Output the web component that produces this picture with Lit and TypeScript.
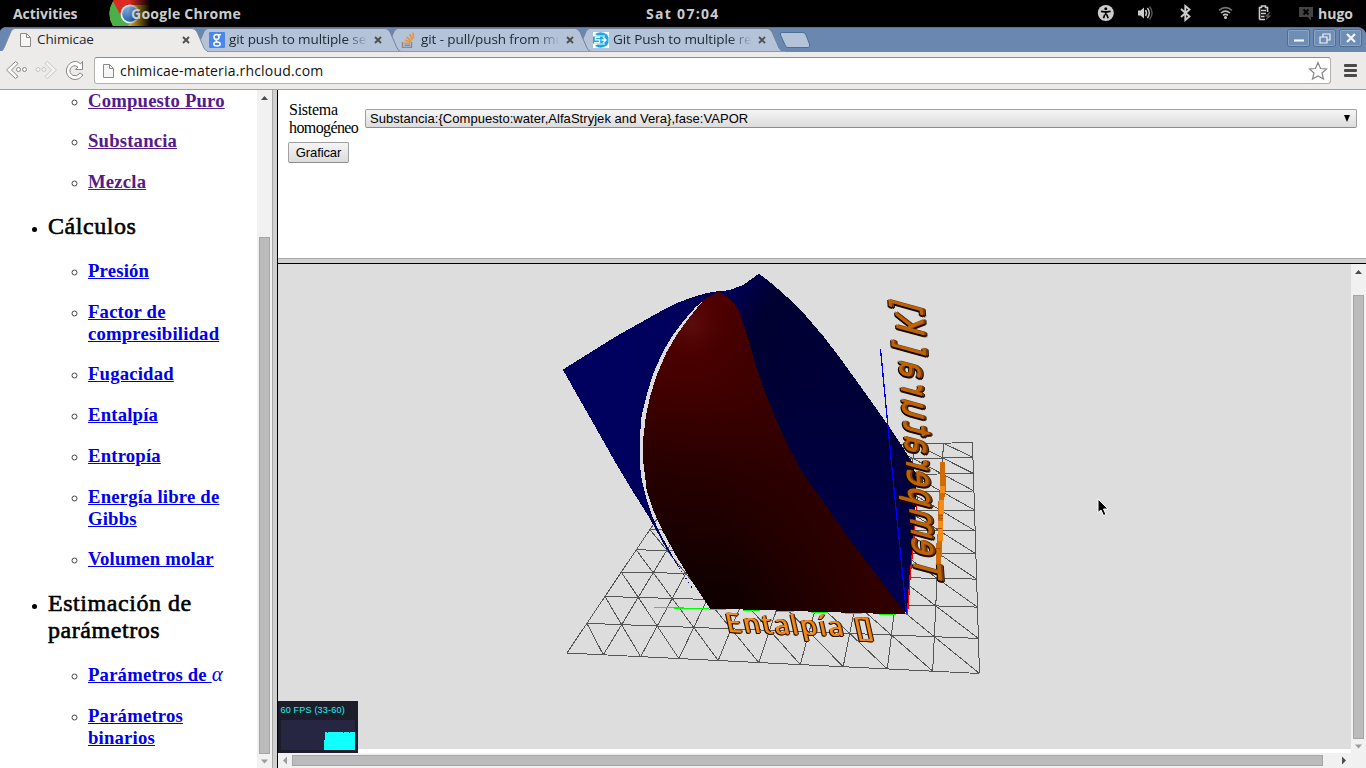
import { LitElement, html, css, svg } from "lit";
import { customElement } from "lit/decorators.js";

type Pt = [number, number];

/** Ground-plane corners: bottom-left, bottom-right, top-right, top-left. */
const QUAD: Pt[] = [[567, 653], [979.5, 673.5], [972.5, 442.5], [704, 449]];
const CELLS = 10;

/** Maps unit-square coordinates into the quad with a projective transform. */
function project(u: number, v: number): Pt {
  const [[x0, y0], [x1, y1], [x2, y2], [x3, y3]] = QUAD;
  const dx1 = x1 - x2, dx2 = x3 - x2, dx3 = x0 - x1 + x2 - x3;
  const dy1 = y1 - y2, dy2 = y3 - y2, dy3 = y0 - y1 + y2 - y3;
  const det = dx1 * dy2 - dx2 * dy1;
  const g = (dx3 * dy2 - dx2 * dy3) / det;
  const h = (dx1 * dy3 - dx3 * dy1) / det;
  const w = g * u + h * v + 1;
  return [
    ((x1 - x0 + g * x1) * u + (x3 - x0 + h * x3) * v + x0) / w,
    ((y1 - y0 + g * y1) * u + (y3 - y0 + h * y3) * v + y0) / w,
  ];
}

function gridPath(): string {
  const p = (i: number, j: number) => project(i / CELLS, j / CELLS).map((n) => n.toFixed(1)).join(" ");
  let d = "";
  for (let k = 0; k <= CELLS; k++) {
    d += `M${p(k, 0)}L${p(k, CELLS)}M${p(0, k)}L${p(CELLS, k)}`;
  }
  for (let i = 0; i < CELLS; i++) {
    for (let j = 0; j < CELLS; j++) d += `M${p(i, j + 1)}L${p(i + 1, j)}`;
  }
  return d;
}

@customElement("system-bar")
class SystemBar extends LitElement {
  static styles = css`
    :host { display: block; height: 27px; background: #000; color: #ccc; }
    .bar { display: grid; height: 27px; align-items: center; white-space: nowrap;
      grid-template-columns: 109px 22px 515px 439px 40px 40px 40px 40px 40px 33px 48px;
      font: 700 14px/27px "Open Sans", "Noto Sans", sans-serif; }
    .bar > * { min-width: 0; }
    .bar > .act { padding-left: 13px; letter-spacing: -0.05px; }
    .logo { display: block; overflow: visible; }
    .name { letter-spacing: 0.25px; position: relative; }
    .clock { letter-spacing: 1.3px; }
    .ico { display: block; }
  `;
  render() {
    return html`<div class="bar">
      <span class="act">Activities</span>
      <svg class="logo" width="22" height="27">
        <defs>
          <linearGradient id="fade"><stop offset=".42" stop-color="#000" stop-opacity="0"/><stop offset=".9" stop-color="#000"/></linearGradient>
          <linearGradient id="orb" x2="0" y2="1"><stop offset="0" stop-color="#7fb0e4"/><stop offset="1" stop-color="#2b66ad"/></linearGradient>
          <clipPath id="crop"><path d="M5 0Q-3.500 13 4 26H46V0Z"/></clipPath>
        </defs>
        <g clip-path="url(#crop)">
          <rect width="46" height="27" fill="#dfb51c"/>
          <path d="M0 0H40L44 5H21L12 18Z" fill="#de2b22"/>
          <path d="M0 3L4.500 2L13 18L22 22L18 27H0Z" fill="#4bb04a"/>
          <circle cx="21" cy="14" r="9.500" fill="#eee"/>
          <circle cx="21" cy="14" r="7.800" fill="url(#orb)"/>
          <rect width="46" height="27" fill="url(#fade)"/>
        </g>
      </svg>
      <span class="name">Google Chrome</span>
      <span class="clock">Sat 07:04</span>
      <svg class="ico" width="40" height="27"><g transform="translate(12 5)">
        <circle cx="8.800" cy="8" r="8" fill="#ccc"/>
        <circle cx="8.800" cy="3.700" r="1.500"/><path d="M4 6.300L7.700 6.800H10L13.600 6.300M8.800 7V10M7.800 9.500L6.500 13.300M9.800 9.500L11.100 13.300" stroke="#000" stroke-width="1.700" fill="none"/>
      </g></svg>
      <svg class="ico" width="40" height="27"><path d="M13 10.500H15.500L19 7.500V18.500L15.500 15.500H13Z" fill="#ccc"/><path d="M20.500 10Q22.500 13 20.500 16M22.500 8Q26 13 22.500 18" stroke="#ccc" stroke-width="1.400" fill="none"/><path d="M24.600 6.500Q29.500 13 24.600 19.500" stroke="#555" stroke-width="1.400" fill="none"/></svg>
      <svg class="ico" width="40" height="27"><path d="M16 9L24.500 16.500L20.300 20V6L24.500 9.500L16 17" stroke="#ccc" stroke-width="1.900" fill="none"/></svg>
      <svg class="ico" width="40" height="27"><g fill="none" stroke-width="1.600"><path d="M14 10.300Q20.500 5 27 10.300" stroke="#777"/><path d="M16 13Q20.500 9.300 25 13" stroke="#bbb"/><path d="M18 15.300Q20.500 13.500 23 15.300" stroke="#ccc"/></g><circle cx="20.500" cy="17.600" r="1.500" fill="#ccc"/></svg>
      <svg class="ico" width="40" height="27"><path d="M14.500 19.500V7.500H16.500V6H20.500V7.500H22.500V12M14.500 19.500H20M16 10.500H21M16 13.500H21M16 16.500H19.500" fill="none" stroke="#ccc" stroke-width="1.600"/><path d="M24.500 12L19.500 16.500H22L20.500 20.500L26.500 15.500H23.500L25.500 12Z" fill="#555"/></svg>
      <svg class="ico" width="33" height="27"><path d="M14 7H28V17H26V20.500L22.500 17H14Z" fill="#444"/><path d="M18.500 9.500L23.500 14.500M23.500 9.500L18.500 14.500" stroke="#000" stroke-width="1.800"/></svg>
      <span>hugo</span>
    </div>`;
  }
}

@customElement("browser-chrome")
class BrowserChrome extends LitElement {
  static styles = css`
    :host { display: block; height: 63px; font: 13.5px/20px "Open Sans", "Noto Sans", sans-serif; color: #1c2733; }
    .strip { position: relative; height: 25px; background: #000; }
    .shapes { position: absolute; left: 0; top: 0; }
    .tabs { position: relative; display: flex; height: 25px; }
    .tab { width: 192px; box-sizing: border-box; padding: 0 2px 0 17px; display: flex; align-items: center; }
    .fav { width: 16px; height: 16px; flex: none; margin-right: 4px; }
    .title { flex: 1; min-width: 0; white-space: nowrap; letter-spacing: -0.1px; position: relative; top: -1px; }
    .faded { -webkit-mask-image: linear-gradient(90deg, #000 84%, transparent 101%); mask-image: linear-gradient(90deg, #000 84%, transparent 101%); }
    .x { width: 8px; height: 8px; flex: none; margin: 1px 0 0 7px; }
    .controls { margin-left: auto; display: flex; gap: 3px; padding: 2px 4px 0 0; }
    .ctl { display: block; width: 23px; height: 18px; }
    .tools { display: flex; align-items: center; height: 37px; background: #edebe9; border-bottom: 1px solid #a09d9a; }
    .nav { flex: none; display: block; }
    .url { flex: 1; height: 25px; border: 1px solid #b4b1ad; border-top-color: #8e8b88; border-radius: 3px; background: #fff; display: flex; align-items: center; color: #111; }
    .url .page { margin: 0 4px 0 5px; }
    .addr { flex: 1; letter-spacing: 0.18px; font-size: 14px; }
    .star { margin-right: 2px; }
    .menu { margin: 0 9px 0 13px; display: grid; gap: 2px; }
    .menu i { width: 13px; height: 3px; border-radius: 1px; background: #4a4a4a; }
  `;
  private page() {
    return html`<svg class="fav page" width="16" height="16"><path d="M3.500 1.500H9.500L13.500 5.500V14.500H3.500Z" fill="#f6f6f6" stroke="#8a8a8a"/><path d="M9.500 1.500V5.500H13.500" fill="none" stroke="#8a8a8a"/></svg>`;
  }
  private close() {
    return html`<svg class="x" viewBox="0 0 8 8"><path d="M1 1L7 7M7 1L1 7" stroke="#505050" stroke-width="1.900"/></svg>`;
  }
  render() {
    const tabPath = (x: number) =>
      `M${x} 24.500Q${x + 2.500} 24.500 ${x + 4} 21L${x + 11} 4.500Q${x + 12.500} 1.500 ${x + 15} 1.500H${x + 192}Q${x + 195} 1.500 ${x + 197} 5L${x + 204} 21Q${x + 206} 24.500 ${x + 208} 24.500Z`;
    return html`
      <div class="strip">
        <svg class="shapes" width="1366" height="25">
          <path d="M0 25V4Q2 0 6 0H1358Q1364 1 1366 6V25Z" fill="#6a88af"/>
          <path d="M6 .5H1358" stroke="#53739d"/>
          ${[576, 384, 192].map((x) => svg`<path d=${tabPath(x)} transform="translate(${x === 192 ? 1 : -1} 0)" fill="#b4c3d8" stroke="#71829b"/>`)}
          <path d="M200 24.500H785" stroke="#8c99ab"/>
          <path d=${tabPath(0)} fill="#edebe9" stroke="#7e8ca0"/>
          <path d="M0 24.500H207" stroke="#edebe9"/>
          <path d="M782 5.500H803Q805 5.500 806 8L809.500 17Q810.500 20.500 808 20.500H788Q786 20.500 785 18L780.500 8Q779.500 5.500 782 5.500Z" fill="#b4c3d8" stroke="#4f6c94"/>
        </svg>
        <div class="tabs">
          <div class="tab">
            ${this.page()}<span class="title">Chimicae</span>${this.close()}
          </div>
          <div class="tab">
            <svg class="fav"><rect width="16" height="16" rx="1" fill="#4a86f0"/><g fill="none" stroke="#fff" stroke-width="1.500"><ellipse cx="7.500" cy="5" rx="2.500" ry="2.500"/><path d="M9.500 3L12 2.500M8 7.500Q6 9 8.500 10"/><ellipse cx="8" cy="12" rx="3.200" ry="2"/></g></svg>
            <span class="title faded">git push to multiple se</span>${this.close()}
          </div>
          <div class="tab">
            <svg class="fav"><path d="M1.500 10V15.500H10.500V10" fill="none" stroke="#8a8a8a" stroke-width="1.500"/><path d="M3.500 13.300H9" stroke="#8a8a8a" stroke-width="1.500"/><path d="M3 11L9 11.300M4 8L9.500 10M5.500 5L10.500 9M8.500 2L11.500 7.500M12 .5L12.500 6.500" stroke="#ea9440" stroke-width="1.700"/></svg>
            <span class="title faded">git - pull/push from mu</span>${this.close()}
          </div>
          <div class="tab">
            <svg class="fav"><rect width="16" height="16" fill="#fff"/><path d="M2 2Q8 -1.500 14 2.500L15.500 5V11L14 13.500Q8 17.500 2 14L4 12.500H12V3.500H4Z" fill="#1ba7e6"/><rect x="0" y="4.500" width="15" height="7" fill="#1ba7e6"/><path d="M7 5.200H2.500V7.800H6.500V10.800H1M8.500 8H13M10 5L13 8L10 11" stroke="#fff" stroke-width="1.400" fill="none"/></svg>
            <span class="title faded">Git Push to multiple re</span>${this.close()}
          </div>
          <div class="controls">
            ${["M7 11.500H17", "M7 8H14V14H7ZM10 7.500V5H17V11H14.500", "M8 5L16 13M16 5L8 13"].map(
              (d, i) => html`<svg class="ctl"><rect x=".5" y=".5" width="22" height="17" rx="2" fill="#6f8eb6" stroke="#4c6b95"/><rect x="1.500" y="1.500" width="20" height="15" rx="1" fill="none" stroke="#8ba4c5"/><path d=${d} fill="none" stroke="#f4f4f4" stroke-width=${i === 1 ? 1.2 : 2.2}/></svg>`
            )}
          </div>
        </div>
      </div>
      <div class="tools">
        <svg class="nav" width="94" height="37">
          <g fill="#fff" stroke="#8a8886">
            <path d="M15.500 9.500L6.500 18L15.500 26.500L18 24.500L11.500 18L18 11.500Z"/><circle cx="18.500" cy="17.500" r="2"/><circle cx="24.500" cy="17.500" r="2"/>
            <path transform="translate(1 0)" d="M81.500 9.500V17.500H74.500L77 15Q72.500 12 69.500 16Q67.500 21 72 23.500Q76 25 79 21L82 23Q77.500 29 71 27Q64.500 24 65.500 17Q68 9 75.500 9.500Q78 10 79.500 12Z"/>
          </g>
          <g fill="#f3f2f1" stroke="#c9c7c4"><path d="M47.500 9.500L56.500 18L47.500 26.500L45 24.500L51.500 18L45 11.500Z"/><circle cx="38" cy="17.500" r="2"/><circle cx="44" cy="17.500" r="2"/></g>
        </svg>
        <div class="url">
          ${this.page()}<span class="addr">chimicae-materia.rhcloud.com</span>
          <svg class="star" width="20" height="20"><path d="M10 1.500L12.500 7.500L18.500 8L14 12L15.500 18L10 15L4.500 18L6 12L1.500 8L7.500 7.500Z" fill="#fff" stroke="#888" stroke-width="1.200"/></svg>
        </div>
        <div class="menu"><i></i><i></i><i></i></div>
      </div>`;
  }
}

@customElement("scroll-track")
class ScrollTrack extends LitElement {
  static properties = { dir: {}, lead: { type: Number }, size: { type: Number }, dim: {} };
  declare dir: string;
  declare lead: number;
  declare size: number;
  declare dim: string;
  static styles = css`
    :host { display: block; background: #f1f1f1; }
    .t { display: flex; flex-direction: column; align-items: center; height: 100%; }
    .t.h { flex-direction: row; height: 15px; }
    .thumb { box-sizing: border-box; border: 1px solid #a5a5a5; background: #bbb; width: 11px; flex: none; }
    .h .thumb { width: auto; height: 11px; }
    .a { width: 15px; height: 15px; flex: none; display: block; }
    .h .a { width: 14px; }
    .end { margin-top: auto; }
    .h .end { margin: 0 16px 0 auto; }
    .gap { flex: none; }
  `;
  render() {
    const h = this.dir === "h";
    const pos = h ? `width:${this.lead}px` : `height:${this.lead}px`;
    const len = h ? `width:${this.size}px` : `height:${this.size}px`;
    const first = h ? "M5 7.500L9 3.500V11.500Z" : "M4 10H11L7.500 6Z";
    const last = h ? "M6 3.500V11.500L10 7.500Z" : "M4 5.500H11L7.500 9.500Z";
    const c = (end: boolean) => ((this.dim === "end") === end ? "#9c9c9c" : "#4c4c4c");
    return html`<div class="t ${h ? "h" : ""}">
      <svg class="a"><path d=${first} fill=${c(false)}/></svg>
      <div class="gap" style=${pos}></div>
      <div class="thumb" style=${len}></div>
      <svg class="a end"><path d=${last} fill=${c(true)}/></svg>
    </div>`;
  }
}

@customElement("side-menu")
class SideMenu extends LitElement {
  static styles = css`
    :host { display: block; background: #fff; overflow: hidden; font-family: "Liberation Serif", serif; font-size: 16px; }
    .root { margin: -0.35px 0 0; padding: 0 8px 0 48px; }
    .root ul { padding-left: 40px; margin: 0; list-style: circle; }
    .root ul li::marker { color: #444; }
    h2 { font-weight: 400; font-size: 24px; line-height: 27px; margin: 19.92px 0; letter-spacing: 0.55px; -webkit-text-stroke: 0.6px #000; }
    h3 { font-size: 18.72px; line-height: 22px; margin: 18.72px 0; letter-spacing: 0.18px; }
    .top > li:first-child h3 { margin-top: 0; }
    a { color: #00e; text-decoration: underline; }
    a.seen { color: #551a8b; }
    .bare { list-style: none; }
    .alpha { font-weight: 400; font-style: italic; font-size: 21px; line-height: 10px; display: inline-block; }
  `;
  private links(items: string[], seen = false) {
    return items.map((t) => html`<li><h3><a class=${seen ? "seen" : ""}>${t}</a></h3></li>`);
  }
  render() {
    return html`<ul class="root">
      <li class="bare"><ul class="top">${this.links(["Compuesto Puro", "Substancia", "Mezcla"], true)}</ul></li>
      <li><h2>Cálculos</h2><ul>${this.links(["Presión", "Factor de compresibilidad", "Fugacidad", "Entalpía", "Entropía", "Energía libre de Gibbs", "Volumen molar"])}</ul></li>
      <li><h2>Estimación de parámetros</h2><ul>
        <li><h3><a>Parámetros de <span class="alpha">α</span></a></h3></li>
        ${this.links(["Parámetros binarios"])}
      </ul></li>
    </ul>`;
  }
}

@customElement("surface-plot")
class SurfacePlot extends LitElement {
  static styles = css`
    :host { display: block; position: relative; background: #ddd; }
    .scene { display: block; }
    .grid { fill: none; stroke: #555; stroke-width: 1; }
    .label { font-family: "Open Sans", "Noto Sans", sans-serif; }
    .flat { filter: drop-shadow(1px 0 0 #d87410) drop-shadow(-1px 1px 0 #2a1400) drop-shadow(1px 0.5px 0 #2a1400); }
    .tall { filter: drop-shadow(2px 0.5px 0 #7a3c00) drop-shadow(-1px 1.5px 0 #0c0500) drop-shadow(1px 1px 0 #2a1400); }
    .stats { position: absolute; left: 0; top: 437px; width: 80px; height: 52px; box-sizing: border-box; padding: 3px; background: #1c1c2b; z-index: 1; }
    .fps { font: 400 9px/13px "Liberation Sans", sans-serif; letter-spacing: 0.2px; color: #1df4f4; white-space: nowrap; height: 16px; margin-left: -0.5px; }
    .graph { display: block; }
  `;
  render() {
    return html`
      <svg class="scene" width="1073" height="485" viewBox="278 264 1073 485">
        <defs>
          <linearGradient id="lb" x1="0" y1="0" x2="1" y2="0"><stop offset="0" stop-color="#000060"/><stop offset=".8" stop-color="#00005c"/><stop offset="1" stop-color="#000048"/></linearGradient>
          <linearGradient id="rb" gradientUnits="userSpaceOnUse" x1="720" y1="300" x2="830" y2="370"><stop offset="0" stop-color="#000058"/><stop offset=".35" stop-color="#000030"/><stop offset=".6" stop-color="#000034"/><stop offset="1" stop-color="#000038"/></linearGradient>
          <linearGradient id="rb2" gradientUnits="userSpaceOnUse" x1="0" y1="380" x2="0" y2="610"><stop offset="0" stop-color="#000044" stop-opacity="0"/><stop offset="1" stop-color="#000050"/></linearGradient>
          <linearGradient id="rd" gradientUnits="userSpaceOnUse" x1="730" y1="292" x2="700" y2="590"><stop offset="0" stop-color="#580000"/><stop offset=".33" stop-color="#430000"/><stop offset=".6" stop-color="#280000"/><stop offset="1" stop-color="#100000"/></linearGradient>
          <linearGradient id="rd2" gradientUnits="userSpaceOnUse" x1="730" y1="580" x2="870" y2="560"><stop offset="0" stop-color="#300000" stop-opacity="0"/><stop offset="1" stop-color="#300000"/></linearGradient>
          <radialGradient id="glow" gradientUnits="userSpaceOnUse" cx="692" cy="325" r="38"><stop offset="0" stop-color="#641818" stop-opacity=".55"/><stop offset="1" stop-color="#500000" stop-opacity="0"/></radialGradient>
        </defs>
        <path class="grid" shape-rendering="crispEdges" d=${gridPath()}/>
        <g shape-rendering="crispEdges">
          <path fill="url(#lb)" d="M562.800 369.700L616.700 336L666.700 308L680 301.800L693.300 297L705 293.500L717 291.300L722 292L706.700 298.300L696 306.700L683 321.700L673 335L663 351.700L653.300 373.300L646.700 395L641.700 415L640 435V465L641.700 480L646.700 500L653 518L660 533L668 548L683 574L666 548L648.300 516L630 487L614 460L590 417.500Z"/>
          <path d="M683 574L693 589" stroke="#000060" stroke-dasharray="1 4"/>
          <path fill="url(#rb)" d="M714 292L730 290L743 285L759 273.700L768 280.500L778 289L792 301.500L806.700 316.700L824 337L840 358L866.700 395L886.700 423.300L898 440L913 463L916 478L916 500L914 530L911 560L907 613L790 570L740 450V320Z"/>
          <path fill="url(#rb2)" d="M760 380L856 380L866.700 395L886.700 423.300L913 463L916 478L916 500L914 530L911 560L907 613L790 570L740 450Z"/>
          <path d="M907.500 614L910 577L913.700 540L916 512L917.500 496" stroke="#f00" stroke-width="1.400" fill="none"/>
          ${["url(#rd)", "url(#rd2)", "url(#glow)"].map((f) => svg`<path fill=${f} d="M717 292.300L708 297L698 306.700L686.700 321L676.700 335L666.700 352L656.700 375L650 396.700L646 415L643.300 438V462L646.700 490L653 510L663 531.700L676.700 556.700L693 583L710 608.500L906 614.500L876.700 575L850 540L826.700 506.700L803 473L789 448L780 428L768 400L758 373L750 345L741.700 318L738 309L733 302L726 296L720 292.300Z"/>`)}
          <path d="M654 607.500L709 608.600M709 609.500H726M743 610.500H760M777 611.500H794M811 612.500H828M845 613.500H862M879 614.500H896" stroke="#0f0" stroke-width="1.200"/>
          <path d="M880.500 349L891.700 465L906.500 613" stroke="#00f" stroke-width="1.300" fill="none"/>
          <path fill="#cf6c06" d="M940 462H945V474L946 478V488L944 500L943 530L942 548L941 567H936V548L938 530V505L940 488Z"/>
          <path fill="#f48c1c" d="M939.500 486H944.500V493H939.500ZM938.500 500H943.500V514H938.500ZM937.500 521H942.500V541H937.500Z"/>
          <path stroke="#a65404" d="M938 515.500H943M938 518.500H943M937 528.500H942M936 548.500H941"/>
        </g>
        <g class="flat">
          <text class="label" transform="matrix(1 .035 .22 1 727.500 632)" font-size="27" font-weight="500" fill="#f58a18"><tspan x="0" textLength="117">Entalpía</tspan> <tspan x="129" textLength="17">[]</tspan></text>
        </g>
        <g class="tall">
          <text class="label" transform="matrix(-.06 -.85 -1.1 -.3 914 578)" font-size="36" font-weight="600" fill="#bd6206" x="5 29 50 87 110 130 149 172 191 218 238 261 268 291 317">Temperatura [K]</text>
        </g>
        <path transform="translate(-.500 -2)" d="M1098.500 501V514.500L1101.500 512L1104 517.500L1106.500 516.500L1104 511H1108.500Z" fill="#000" stroke="#fff" stroke-width="1"/>
      </svg>
      <div class="stats">
        <div class="fps">60 FPS (33-60)</div>
        <svg class="graph" width="74" height="30" shape-rendering="crispEdges"><rect width="74" height="30" fill="#262642"/><path d="M43 30V20H44V12H46V13H47V12H62V13H63V12H68V13H69V12H74V30Z" fill="#1ff"/></svg>
      </div>`;
  }
}

@customElement("app-root")
class AppRoot extends LitElement {
  static styles = css`
    :host { display: block; width: 1366px; height: 768px; overflow: hidden; background: #fff; }
    .frames { display: grid; grid-template-columns: 257px 15px 6px 1088px; height: 678px; }
    .vbar { box-sizing: border-box; background: #d0d0d0; border-left: 1px solid #a8a8a8; border-right: 1px solid #000; }
    .right { display: grid; grid-template-rows: 168px 6px 504px; }
    .hbar { box-sizing: border-box; background: #d0d0d0; border-top: 1px solid #a8a8a8; border-bottom: 1px solid #000; }
    .form { background: #fff; padding: 11px 9px 0 10px; }
    .row { display: flex; align-items: center; }
    .lab { width: 77px; padding-left: 1px; box-sizing: border-box; font: 16px/18px "Liberation Serif", serif; letter-spacing: -0.6px; }
    .wide { letter-spacing: -0.25px; }
    .select, .btn { box-sizing: border-box; border: 1px solid #a0a0a0; border-bottom-color: #8c8c8c; border-radius: 2px; background: linear-gradient(#f5f5f5, #dcdcdc); font: 13px/17px "Liberation Sans", sans-serif; color: #000; }
    .select { flex: 1; height: 19px; margin-bottom: 2px; padding: 0 5px 0 4px; display: flex; justify-content: space-between; align-items: center; letter-spacing: 0.045px; }
    .btn { display: block; width: 61px; height: 21px; margin-top: 5px; padding: 0; text-align: center; letter-spacing: -0.1px; }
    .view { display: grid; grid-template-columns: 1073px 15px; grid-template-rows: 489px 15px; }
    .canvas { background: #fff; }
    .plot { height: 485px; }
    .hs { grid-column: 1 / 3; }
  `;
  render() {
    return html`
      <system-bar></system-bar>
      <browser-chrome></browser-chrome>
      <div class="frames">
        <side-menu></side-menu>
        <scroll-track lead="132" size="517" dim="end"></scroll-track>
        <div class="vbar"></div>
        <div class="right">
          <div class="form">
            <div class="row">
              <div class="lab"><span class="wide">Sistema</span> homogéneo</div>
              <div class="select"><span>Substancia:{Compuesto:water,AlfaStryjek and Vera},fase:VAPOR</span><svg width="8" height="7"><path d="M1 0H7L4 7Z"/></svg></div>
            </div>
            <button class="btn">Graficar</button>
          </div>
          <div class="hbar"></div>
          <div class="view">
            <div class="canvas"><surface-plot class="plot"></surface-plot></div>
            <scroll-track lead="16" size="444" dim="end"></scroll-track>
            <scroll-track class="hs" dir="h" lead="0" size="1031" dim="start"></scroll-track>
          </div>
        </div>
      </div>`;
  }
}
